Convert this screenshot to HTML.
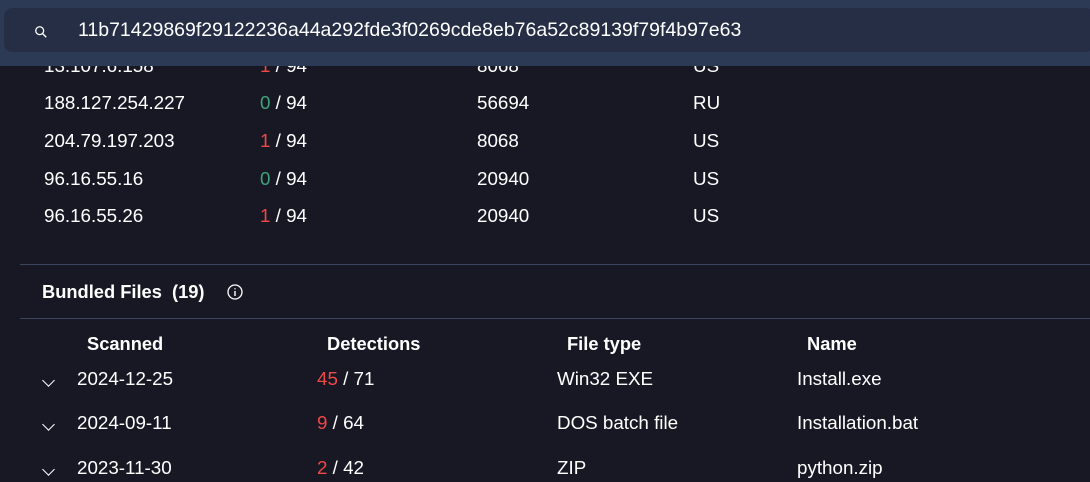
<!DOCTYPE html>
<html><head><style>
body{margin:0;width:1090px;height:482px;background:#181825;overflow:hidden;font-family:"Liberation Sans",sans-serif;color:#fff;position:relative}
.t{position:absolute;font-size:18.8px;white-space:nowrap;line-height:20px}
.r{color:#f04747}.g{color:#3fa37a}
.b{font-weight:bold;font-size:18.3px}
.hr{position:absolute;left:20px;right:0;height:1px;background:#3a4560}
.chev{position:absolute;width:8px;height:8px;border-right:1.6px solid #fff;border-bottom:1.6px solid #fff;transform:rotate(45deg)}
</style></head><body>
<div class="t" style="left:44px;top:56px">13.107.6.158</div><div class="t" style="left:260px;top:56px"><span class="r">1</span> / 94</div><div class="t" style="left:477px;top:56px">8068</div><div class="t" style="left:693px;top:56px">US</div>
<div class="t" style="left:44px;top:93px">188.127.254.227</div><div class="t" style="left:260px;top:93px"><span class="g">0</span> / 94</div><div class="t" style="left:477px;top:93px">56694</div><div class="t" style="left:693px;top:93px">RU</div>
<div class="t" style="left:44px;top:131px">204.79.197.203</div><div class="t" style="left:260px;top:131px"><span class="r">1</span> / 94</div><div class="t" style="left:477px;top:131px">8068</div><div class="t" style="left:693px;top:131px">US</div>
<div class="t" style="left:44px;top:169px">96.16.55.16</div><div class="t" style="left:260px;top:169px"><span class="g">0</span> / 94</div><div class="t" style="left:477px;top:169px">20940</div><div class="t" style="left:693px;top:169px">US</div>
<div class="t" style="left:44px;top:206px">96.16.55.26</div><div class="t" style="left:260px;top:206px"><span class="r">1</span> / 94</div><div class="t" style="left:477px;top:206px">20940</div><div class="t" style="left:693px;top:206px">US</div>
<div style="position:absolute;left:0;top:0;width:1090px;height:66px;background:#2d3a55"></div>
<div style="position:absolute;left:4px;top:8px;width:1090px;height:44px;border-radius:8px;background:#252e45"></div>
<svg style="position:absolute;left:34px;top:25px" width="14" height="14" viewBox="0 0 16 16"><circle cx="6.5" cy="6.5" r="4.5" fill="none" stroke="#fff" stroke-width="1.5"/><path d="M10 10L14 14" stroke="#fff" stroke-width="1.6"/></svg>
<div class="t" style="left:78px;top:20px;font-size:19.5px">11b71429869f29122236a44a292fde3f0269cde8eb76a52c89139f79f4b97e63</div>
<div class="hr" style="top:264px"></div>
<div class="t b" style="left:42px;top:282px">Bundled Files&nbsp; (19)</div>
<svg style="position:absolute;left:227px;top:284px" width="16" height="16" viewBox="0 0 16 16"><circle cx="8" cy="8" r="7" fill="none" stroke="#fff" stroke-width="1.3"/><path d="M8 7v5M8 4.2v1.2" stroke="#fff" stroke-width="1.4"/></svg>
<div class="hr" style="top:318px"></div>
<div class="t b" style="left:87px;top:334px">Scanned</div><div class="t b" style="left:327px;top:334px">Detections</div><div class="t b" style="left:567px;top:334px">File type</div><div class="t b" style="left:807px;top:334px">Name</div>
<div class="chev" style="left:44px;top:376px"></div><div class="t" style="left:77px;top:369px">2024-12-25</div><div class="t" style="left:317px;top:369px"><span class="r">45</span> / 71</div><div class="t" style="left:557px;top:369px">Win32 EXE</div><div class="t" style="left:797px;top:369px">Install.exe</div>
<div class="chev" style="left:44px;top:420px"></div><div class="t" style="left:77px;top:413px">2024-09-11</div><div class="t" style="left:317px;top:413px"><span class="r">9</span> / 64</div><div class="t" style="left:557px;top:413px">DOS batch file</div><div class="t" style="left:797px;top:413px">Installation.bat</div>
<div class="chev" style="left:44px;top:465px"></div><div class="t" style="left:77px;top:458px">2023-11-30</div><div class="t" style="left:317px;top:458px"><span class="r">2</span> / 42</div><div class="t" style="left:557px;top:458px">ZIP</div><div class="t" style="left:797px;top:458px">python.zip</div>
</body></html>
